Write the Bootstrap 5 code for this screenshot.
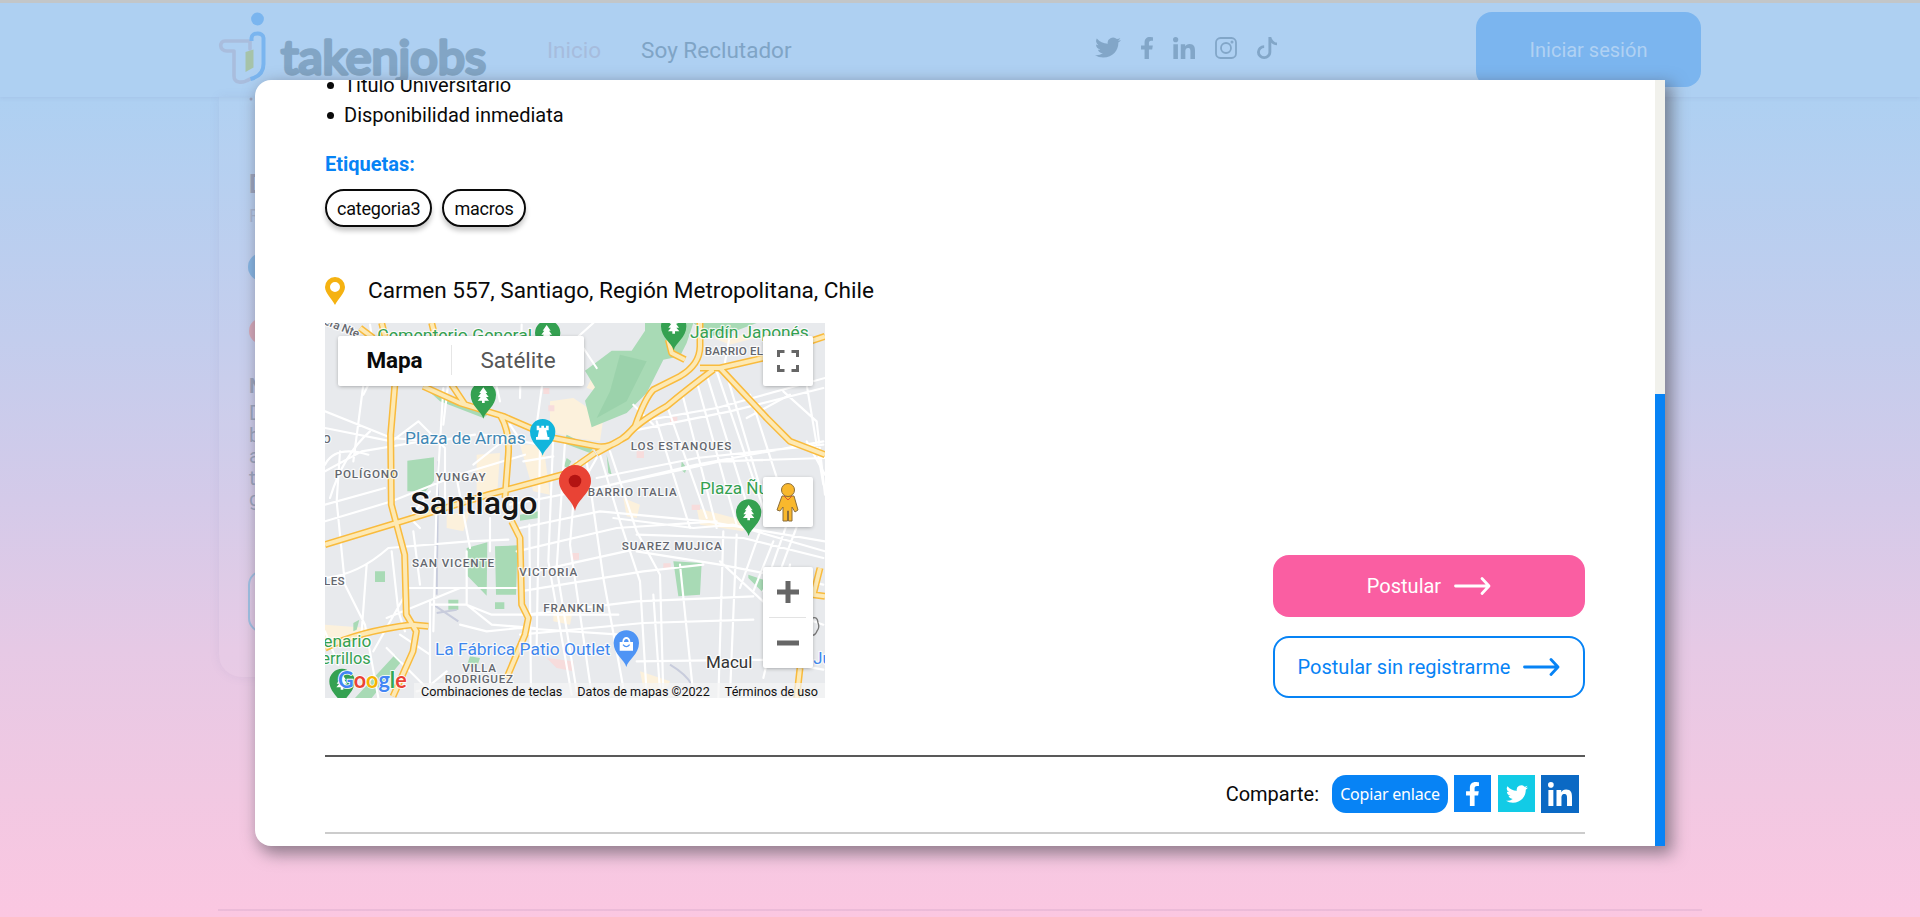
<!DOCTYPE html>
<html lang="es">
<head>
<meta charset="utf-8">
<meta name="viewport" content="width=device-width, initial-scale=1">
<title>takenjobs</title>
<link href="https://cdn.jsdelivr.net/npm/bootstrap@5.3.0/dist/css/bootstrap.min.css" rel="stylesheet">
<style>
body{font-family:Roboto,"Liberation Sans",sans-serif;font-size:20px;line-height:30px;color:#0a0a0a;height:917px;overflow:hidden;position:relative;background:linear-gradient(#abd0f4 0,#aed0f2 100px,#c3cded 340px,#d4cae9 500px,#e6c9e5 650px,#f1c8e2 790px,#fbc7e1 917px)}
.topbar{height:97px;border-top:3px solid #c2c6c9;padding:0 219px 5px 218px;box-shadow:0 1px 4px rgba(120,140,190,.18);background:#aed0f2}
.brand{width:275px;height:94px;margin-top:-1px}
.menu{font-size:22.5px;margin-left:54px;padding-top:4px}
.menu a{text-decoration:none;color:#7fa4c6}.menu a.on{color:#a6bcdd}
.soc{color:#82a6c8;margin-left:303px}
.login{width:225px;height:75px;border-radius:16px;background:#7bb5ef;color:#b0d1f3;font-size:20px;margin-top:4px}
.ghost{width:400px;height:580px;margin-left:219px;border:0;border-radius:0 0 22px 22px;background:rgba(255,255,255,.04);box-shadow:0 0 10px rgba(130,130,180,.13);color:#9ba4bd}
.ghost svg{display:block}
.foot-line{height:2px;margin:232px 218px 0;background:rgba(190,150,190,.25)}
.sheet{position:absolute;left:255px;top:80px;width:1410px;height:766px;background:#fff;border-radius:16px 0 0 16px;box-shadow:5px 6px 16px 2px rgba(80,75,85,.6);overflow:hidden}
.sheet-body{width:1400px;padding:0 70px}
.track{width:10px;background:#f1f1ec}.thumb{height:452px;background:#0783f5}
.reqs{margin:-10px 0 19px;padding:0}
.reqs li{list-style:none;display:flex;align-items:center;gap:10px;padding-left:2px}
.reqs li::before{content:"";width:7px;height:7px;border-radius:50%;background:#0a0a0a}
.blue{color:#0783f5}
.tag{height:38px;border:2px solid #0a0a0a;border-radius:19px;padding:0 10px;font-size:18px;line-height:35px;letter-spacing:-.2px;box-shadow:0 4px 5px rgba(0,0,0,.22)}
.addr{font-size:22.6px;height:30px;margin-top:49px;gap:23px;letter-spacing:-.03px}
.mapbox{width:500px;height:375px;position:relative;margin-top:17px;overflow:hidden;background:#e8eaed}
.mapbox>svg{position:absolute;left:0;top:0}
.ctl{position:absolute;background:#fff;border-radius:2px;box-shadow:0 1px 4px -1px rgba(0,0,0,.4)}
.types{left:13px;top:13px;width:246px;height:50px;font-size:22.5px;padding-bottom:2px}
.types div{width:132px}.types div:first-child{width:114px;border-right:1px solid #e6e6e6}
.right-ctl{left:438px;width:50px}
.legal{position:absolute;right:0;bottom:0;height:15px;font-size:12.6px;line-height:17px;color:#111;background:rgba(245,245,245,.7)}
.apply{width:312px;height:62px;border-radius:16px;gap:13px}
.pink{background:#fa5ea2;color:#fff}
.line-btn{border:2px solid #0783f5;color:#0783f5}
.rule1{height:2px;background:#595959;margin-top:57px}
.rule2{height:2px;background:#ccc;margin-top:19px}
.copy{width:116px;height:38px;border-radius:14px;background:#0783f5;color:#fff;font:16px/39px "Noto Sans",sans-serif;letter-spacing:-.2px;text-align:center}
.sq{width:37px;height:37px}
</style>
</head>
<body>
<svg width="0" height="0" class="position-absolute"><defs>
<symbol id="tw" viewBox="0 1 16 15" preserveAspectRatio="none"><path fill="currentColor" d="M5.026 15c6.038 0 9.341-5.003 9.341-9.334 0-.14 0-.282-.006-.422A6.685 6.685 0 0 0 16 3.542a6.658 6.658 0 0 1-1.889.518 3.301 3.301 0 0 0 1.447-1.817 6.533 6.533 0 0 1-2.087.793A3.286 3.286 0 0 0 7.875 6.03a9.325 9.325 0 0 1-6.767-3.429 3.289 3.289 0 0 0 1.018 4.382A3.323 3.323 0 0 1 .64 6.575v.045a3.288 3.288 0 0 0 2.632 3.218 3.203 3.203 0 0 1-.865.115 3.23 3.23 0 0 1-.614-.057 3.283 3.283 0 0 0 3.067 2.277A6.588 6.588 0 0 1 .78 13.58a6.32 6.32 0 0 1-.78-.045A9.344 9.344 0 0 0 5.026 15z"/></symbol>
<symbol id="fb" viewBox="22 0 276 512" preserveAspectRatio="none"><path fill="currentColor" d="M279.14 288l14.22-92.66h-88.91v-60.13c0-25.35 12.42-50.06 52.24-50.06h40.42V6.26S260.43 0 225.36 0c-73.22 0-121.08 44.38-121.08 124.72v70.62H22.89V288h81.39v224h100.17V288z"/></symbol>
<symbol id="li" viewBox="0 0 448 448" preserveAspectRatio="none"><path fill="currentColor" d="M100.28 448H7.4V148.9h92.88zM53.79 108.1C24.09 108.1 0 83.5 0 53.8a53.79 53.79 0 0 1 107.58 0c0 29.7-24.1 54.3-53.79 54.3zM447.9 448h-92.68V302.4c0-34.7-.7-79.2-48.29-79.2-48.29 0-55.69 37.7-55.69 76.7V448h-92.78V148.9h89.08v40.8h1.3c12.4-23.5 42.69-48.3 87.88-48.3 94 0 111.28 61.9 111.28 142.3V448z"/></symbol>
<symbol id="arrow" viewBox="0 0 37 20"><path d="M1.5 10H34M28 2.500l7 7.500-7 7.500" fill="none" stroke="currentColor" stroke-width="2.800" stroke-linecap="round" stroke-linejoin="round"/></symbol>
<g id="pin"><path d="M0 72C-5 50-38 34-38 0A38 38 0 0 1 38 0C38 34 5 50 0 72z"/></g>
<g id="tree"><path d="M0-22l12 17H7l9 12H8l9 11H4v7h-8v-7h-13l9-11h-8l9-12h-5z" fill="#fff"/></g>
</defs></svg>

<header class="topbar d-flex align-items-center">
  <svg class="brand" viewBox="218 0 275 94">
    <circle cx="257.500" cy="19" r="6.400" fill="#7ab5ef"/>
    <path d="M250 49V41h-25c-6 0-6 10 2 10h7v25c0 7 8 8 16 3" fill="none" stroke="#a9bddd" stroke-width="3.600" stroke-linecap="round" stroke-linejoin="round"/>
    <path d="M251.500 41v-3c0-6 12-6 12 0v26c0 8-5 13-13 15" fill="none" stroke="#7ab5ef" stroke-width="4"/>
    <path d="M245.500 52l8-2.500v18l-8 4.500z" fill="#a6c3a9"/>
    <text x="281" y="74" font-family="Lato" font-weight="400" font-size="47" textLength="205" lengthAdjust="spacingAndGlyphs" fill="#82a5c5" stroke="#82a5c5" stroke-width="3.400" stroke-linejoin="round">takenjobs</text>
  </svg>
  <nav class="menu d-flex"><a class="on" href="#">Inicio</a><a href="#" style="margin-left:40px">Soy Reclutador</a></nav>
  <div class="soc d-flex align-items-center">
    <svg width="26" height="23"><use href="#tw"/></svg>
    <svg width="12" height="22" style="margin-left:20px"><use href="#fb"/></svg>
    <svg width="22" height="22" style="margin-left:20px"><use href="#li"/></svg>
    <svg width="22" height="22" viewBox="0 0 22 22" style="margin-left:20px" fill="none" stroke="currentColor" stroke-width="1.800"><rect x="1" y="1" width="20" height="20" rx="4.500"/><circle cx="11" cy="11" r="5"/><circle cx="17" cy="5" r=".6"/></svg>
    <svg width="20" height="22" viewBox="1 0 14 16" preserveAspectRatio="none" style="margin-left:20px"><path fill="currentColor" d="M9 0h1.980c.144.715.54 1.617 1.235 2.512C12.895 3.389 13.797 4 15 4v2c-1.753 0-3.070-.814-4-1.829V11a5 5 0 1 1-5-5v2a3 3 0 1 0 3 3V0Z"/></svg>
  </div>
  <div class="login ms-auto d-flex align-items-center justify-content-center">Iniciar sesión</div>
</header>
<div class="card ghost">
  <svg width="60" height="579" viewBox="219 97 60 579" fill="#9ba4bd" font-size="20">
    <circle cx="251" cy="99" r="1.500"/>
    <text x="249" y="193" font-size="25" font-weight="700">D</text><text x="249" y="222" font-size="18" opacity=".55">R</text>
    <circle cx="262" cy="267" r="14" fill="#84b4e3"/><circle cx="262" cy="331" r="13" fill="#d5a8b9"/>
    <text x="249" y="393" font-weight="700">N</text><text x="249" y="420">D</text><text x="249" y="442">b</text><text x="249" y="463">a</text><text x="249" y="485">t</text><text x="249" y="506">g</text>
    <rect x="249" y="571" width="60" height="61" rx="14" fill="none" stroke="#9fc0e4" stroke-width="2"/>
  </svg>
</div>
<div class="foot-line"></div>

<main class="sheet d-flex">
  <div class="sheet-body">
    <ul class="reqs"><li>Título Universitario</li><li>Disponibilidad inmediata</li></ul>
    <div class="blue fw-bold">Etiquetas:</div>
    <div class="d-flex" style="gap:10px;margin-top:10px"><span class="tag">categoria3</span><span class="tag">macros</span></div>
    <div class="addr d-flex align-items-center">
      <svg width="20" height="28" viewBox="0 0 20 28"><path fill="#f5b211" fill-rule="evenodd" d="M10 0a10 10 0 0 1 10 10c0 6-7 12-10 18C7 22 0 16 0 10A10 10 0 0 1 10 0zm0 5a5 5 0 1 0 0 10 5 5 0 0 0 0-10z"/></svg>
      <span>Carmen 557, Santiago, Región Metropolitana, Chile</span>
    </div>
    <div class="d-flex justify-content-between align-items-end">
      <div class="mapbox">
        <svg width="500" height="375" viewBox="15 15 1500 1125" font-family="Roboto">
          <!-- parks and built-up areas -->
          <g fill="#fcf1dc"><path d="M690 250l70-10 90 60-10 70-80-10-70-20zM600 380h70l20 150-50-10zM470 410l70-5-10 150-60-30zM380 590l70-10-20 60-50-10zM830 150l-30 60 30 10zM15 920l130 10-60 40-70 20zM910 540l50 20-10 40-30-5zM700 860l60 10-10 50-50-10zM1180 60l200-20-150 40zM960 1060l90 30-20 40-60-20zM1130 570l150 40-10 30-130-20z"/></g>
          <g fill="#a8dab5"><path d="M975 15h145l-20 60-20 40-50 10-50 100-60 60-105 43-20-80 30-40-30-50 80-60h60l40-60zM310 205l200 80-20 15-130-50zM262 428l80-10v70l-25 32h-55zM440 690l62-17-2 160-58-60zM525 685l68-3-5 148h-60zM1060 730l85 5-5 95-65 5zM165 760h30v32h-30zM385 845h30v30h-30zM525 853h28v20h-28zM1085 430l15 20-5 15-12-10zM740 350l80 40-10 15-80-30zM225 1010l20 20-90 110h-50zM740 420l14 10-10 20-12-5zM860 410l15 60-10-5zM600 590l55-10v20l-55 8zM1120 15h190l-80 30-60 10zM100 915l18-10-8 30-10 5zM450 1015l30 5-10 30-30-5zM1285 770l60 20-20 30-40-40z"/></g>
          <path d="M900 110l80 20-60 120-90 50 40-80z" fill="#95cfa6" opacity=".7"/>
          <g fill="#f7dcdc"><path d="M670 210h18v18h-18zM685 262h18v18h-18zM950 400h22v20h-22zM1050 296h22v18h-22zM755 705h22v20h-22zM1030 736h22v18h-22zM1115 560h25v16h-25zM680 1020l80 10v30l-50-10z"/></g>
          <path d="M355 430l-5 400M310 205l55 30M340 860l75 50M350 885l60-10M1050 1040q50 30 65 60" fill="none" stroke="#c8ccdc" stroke-width="6"/>
          <!-- streets -->
          <g fill="none" stroke="#fff" stroke-width="6.500" stroke-linecap="round" stroke-linejoin="round">
            <path d="M15 280l200 80 130 10 120-20M15 460l110-60 240-40M15 610l200-60 200-80 200-60M15 780q100-10 190-90l240-20 120-5M15 560l180-50M60 400l-10 150 25 250 60 120 40 220M130 200l-30 230M15 440q30-60 130-30M215 700l20 180 20 60M140 740l-15 200M250 810h190M200 900l220-90h170M330 860h110l75 30h380M250 840l-90 160M340 940l10-400 20-330M15 330l200 40 80-60 80 80v180M440 700v160l75 60 130 10M330 850v260l-40 10M420 920l80 20 100-10 300 20M240 950l90 60M15 940l40 100M200 990l120 120 60-50"/>
            <path d="M600 240l5-220M650 320l40-290M540 250l-30-130M700 350l-15 380 70 400M735 370l-25 380 60 370M770 430l-20 250 65 450M800 430l50 350 60 330M840 410l60 200 60 180 20 340M870 400l80 240 70 130 10 360M660 380l-10 600M628 620l5 510"/>
            <path d="M600 630l240-50 320 30 355 60M590 700l300-70 300-20M600 770l340-75M600 820l370-60 180-20M620 890l330-40 350-15M600 950l370-35 330-10M570 560l260-50 300-70 380-70M830 480l300-60 380-40M830 510l370-80 315-10M930 340l300-60 280-70M960 310l230-40 325-90M880 600l240 30 120-10 275 80M950 700l250 40 310 60M950 650l320 10 240 60M1200 730l140 130 170 60M950 1030l390-5 170 30M1000 830l20 290M1080 740l40 390M1210 640l-15 500M1250 650l-20 480M1320 640l-60 170M1360 670l-60 150M1400 620l-70 200M1440 600l-60 160M1010 310l100 320M1040 260l120 340M1090 240l100 390M1130 190l120 430M1160 170l140 450M1190 160l150 440M1220 170l110 370M1290 230l100 310M1390 220l100 90 25 220M1460 200l50 300M1330 1080l80-340"/>
            <path d="M150 340q-80 70-120 200M330 520l-60 80 30 30M280 640l20 160M410 480l40 210M510 600v100M560 360l-100 80M490 350l170 30M610 430l90-15M590 350l-20-30M830 150l-60-90 50-45M150 20l20 130-40 80M390 150l-20 170M940 260l60 60M1230 50l-20 110M1350 170l90-30M1280 300l130-70M1460 370l55 100M830 420l-40 70"/>
          </g>
          <!-- highways -->
          <g fill="none" stroke-linejoin="round">
            <g stroke="#f9bb3d" stroke-width="21"><path d="M225 195L212 350l2 210 40 150 5 180 30 50-10 60-60 135M15 680l230-70 260-80 230-62 90-63M310 205l110 50 130 40 150 65 130 25q55 10 115-60 30-85 55-110l80-40q60-35 60-90V15M1180 155q-80 60-140 110-90 50-120 90l-90 50M1140 150h60l130-30M1200 150l140 150 70 70 105 40M185 15l10 40M335 15l10 40M395 200l40 60M540 290q30 50 25 120l-10 130M575 610l25 50 5 200 20 40-10 50-55 130M15 990q100-50 260-70l50 5M1045 65l10 40 40 20M1500 750l-20 80 35 5M1440 1050l-10 90M120 30l40 30M1440 80l75-25"/></g>
            <g stroke="#fde9b4" stroke-width="12"><path d="M225 195L212 350l2 210 40 150 5 180 30 50-10 60-60 135M15 680l230-70 260-80 230-62 90-63M310 205l110 50 130 40 150 65 130 25q55 10 115-60 30-85 55-110l80-40q60-35 60-90V15M1180 155q-80 60-140 110-90 50-120 90l-90 50M1140 150h60l130-30M1200 150l140 150 70 70 105 40M185 15l10 40M335 15l10 40M395 200l40 60M540 290q30 50 25 120l-10 130M575 610l25 50 5 200 20 40-10 50-55 130M15 990q100-50 260-70l50 5M1045 65l10 40 40 20M1500 750l-20 80 35 5M1440 1050l-10 90M120 30l40 30M1440 80l75-25"/></g>
          </g>
          <!-- pins -->
          <g fill="#34a151"><use href="#pin" x="683" y="45"/><use href="#pin" x="490" y="230"/><use href="#pin" x="1061" y="25"/><use href="#pin" x="1286" y="582"/><use href="#pin" x="66" y="1090"/></g>
          <use href="#tree" x="680" y="43"/><use href="#tree" x="490" y="230"/><use href="#tree" x="1061" y="22"/><use href="#tree" x="1286" y="582"/><use href="#tree" x="66" y="1090"/>
          <use href="#pin" x="668" y="341" fill="#12b5dc"/><path d="M650 323h8v6h6v-6h8v6h6v-6h8v14h-7l4 20h5v8h-40v-8h5l4-20h-7z" fill="#fff"/>
          <use href="#pin" x="919" y="975" fill="#4e94f5"/><path d="M899 972h8c0-20 24-20 24 0h8v26h-40zm13 0h14c0-12-14-12-14 0z" fill="#fff"/><path d="M909 980q10 12 20 0" fill="none" stroke="#4e94f5" stroke-width="4"/>
          <!-- labels -->
          <g stroke="#fff" stroke-width="7" stroke-linejoin="round" paint-order="stroke" stroke-opacity=".8">
            <g font-size="35" font-weight="500" fill="#64676e">
              <text x="44" y="481" textLength="190">POLÍGONO</text><text x="347" y="489" textLength="150">YUNGAY</text><text x="932" y="395" textLength="302">LOS ESTANQUES</text><text x="803" y="534" textLength="267">BARRIO ITALIA</text><text x="905" y="695" textLength="300">SUAREZ MUJICA</text><text x="276" y="747" textLength="246">SAN VICENTE</text><text x="598" y="774" textLength="174">VICTORIA</text><text x="670" y="882" textLength="183">FRANKLIN</text><text x="12" y="800" textLength="62">LES</text><text x="427" y="1062" textLength="101">VILLA</text><text x="374" y="1096" textLength="205">RODRIGUEZ</text><text x="1154" y="110" textLength="175">BARRIO EL</text><text x="8" y="375">O</text>
              <text transform="translate(10 18) rotate(22)" textLength="120">era Nte.</text></g>
            <g font-size="51" fill="#34a151"><text x="172" y="69" textLength="464" lengthAdjust="spacingAndGlyphs">Cementerio General</text><text x="1110" y="60" textLength="356" lengthAdjust="spacingAndGlyphs">Jardín Japonés</text><text x="1140" y="528" textLength="232" lengthAdjust="spacingAndGlyphs">Plaza Ñuñ</text><text x="10" y="988" textLength="144" lengthAdjust="spacingAndGlyphs">enario</text><text x="4" y="1038" textLength="148" lengthAdjust="spacingAndGlyphs">errillos</text></g>
            <text x="255" y="378" font-size="51" fill="#4088b5" textLength="362" lengthAdjust="spacingAndGlyphs">Plaza de Armas</text>
            <text x="345" y="1012" font-size="51" fill="#3e87ee" textLength="526" lengthAdjust="spacingAndGlyphs">La Fábrica Patio Outlet</text><text x="1480" y="1038" font-size="50" fill="#3e87ee">Ju</text>
            <text x="1158" y="1049" font-size="51" fill="#333" textLength="139" lengthAdjust="spacingAndGlyphs">Macul</text>
            <text x="271" y="588" font-size="94" font-weight="500" fill="#161616" textLength="381" lengthAdjust="spacingAndGlyphs">Santiago</text>
          </g>
          <path d="M765 579C758 545 717 525 717 489A48 48 0 0 1 813 489C813 525 772 545 765 579z" fill="#e94335"/><circle cx="765" cy="489" r="19" fill="#b31412"/>
          <path d="M1478 900q14-5 16 14 6 14-3 25-6 16-18 12" fill="none" stroke="#777" stroke-width="4"/>
          <text x="54" y="1110" font-family="Lato" font-size="69" font-weight="700" stroke="#fff" stroke-width="5" paint-order="stroke" textLength="206" lengthAdjust="spacingAndGlyphs" fill="#4285f4">G<tspan fill="#ea4335">o</tspan><tspan fill="#f5b400">o</tspan>g<tspan fill="#34a853">l</tspan><tspan fill="#ea4335">e</tspan></text>
        </svg>
        <div class="ctl types d-flex align-items-center text-center"><div class="fw-bold" style="letter-spacing:-.1px">Mapa</div><div style="color:#565656">Satélite</div></div>
        <div class="ctl right-ctl" style="top:13px;height:50px"><svg width="50" height="50" class="d-block" fill="none" stroke="#666" stroke-width="3"><path d="M15.500 21v-5.500h6M28.500 15.500h6V21M34.500 29v5.500h-6M21.500 34.500h-6V29"/></svg></div>
        <div class="ctl right-ctl" style="top:154px;height:50px"><svg width="50" height="50" viewBox="0 0 50 50" class="d-block" fill="#f9b82d" stroke="#8a6d3b" stroke-width="1"><path d="M19 19h12l4 14-3 2-3-5v14h-3.500V34h-1v10H20V30l-3 4-3-1z"/><circle cx="25" cy="13" r="6.500"/><path d="M21 19l4 4 4-4" fill="none" stroke="#e2532f"/></svg></div>
        <div class="ctl right-ctl" style="top:244px;height:101px"><svg width="50" height="101" class="d-block" stroke="#666" stroke-width="5"><path d="M14 25h22M25 14v22M14 76h22"/><path d="M6 50.500h37" stroke="#e3e3e3" stroke-width="1"/></svg></div>
        <div class="legal d-flex" style="gap:15px;padding:0 7px 0 7px"><span>Combinaciones de teclas</span><span>Datos de mapas ©2022</span><span>Términos de uso</span></div>
      </div>
      <div class="d-flex flex-column" style="gap:19px">
        <div class="apply pink d-flex align-items-center justify-content-center">Postular <svg width="37" height="20"><use href="#arrow"/></svg></div>
        <div class="apply line-btn d-flex align-items-center justify-content-center">Postular sin registrarme <svg width="37" height="20"><use href="#arrow"/></svg></div>
      </div>
    </div>
    <div class="rule1"></div>
    <div class="d-flex justify-content-end" style="margin-top:18px;padding-right:6px;height:38px">
      <span style="margin-right:13px;line-height:38px">Comparte:</span>
      <div class="copy">Copiar enlace</div>
      <div class="sq text-white d-flex align-items-center justify-content-center" style="background:#0783f5;margin-left:6px"><svg width="13" height="24"><use href="#fb"/></svg></div>
      <div class="sq text-white d-flex align-items-center justify-content-center" style="background:#12cbe6;margin-left:7px"><svg width="22" height="20"><use href="#tw"/></svg></div>
      <div class="sq text-white d-flex align-items-center justify-content-center" style="background:#0b69c4;margin-left:6px;width:38px;height:38px"><svg width="24" height="24"><use href="#li"/></svg></div>
    </div>
    <div class="rule2"></div>
  </div>
  <div class="track d-flex flex-column justify-content-end"><div class="thumb"></div></div>
</main>
<script src="https://cdn.jsdelivr.net/npm/bootstrap@5.3.0/dist/js/bootstrap.bundle.min.js"></script>
</body>
</html>
